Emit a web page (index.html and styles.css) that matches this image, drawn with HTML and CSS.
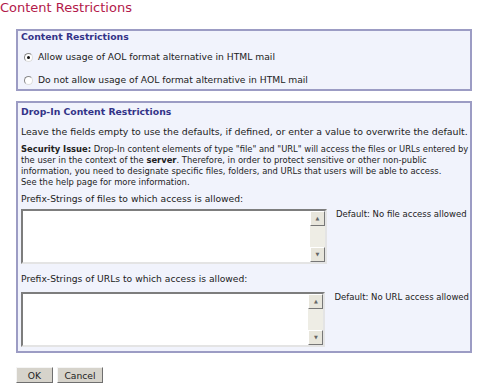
FILE: index.html
```html
<!DOCTYPE html>
<html lang="en">
<head>
    <meta charset="UTF-8">
    <title>Content Restrictions</title>
    <link rel="stylesheet" href="styles.css">
</head>
<body>
    <h1 class="page-title">Content Restrictions</h1>

    <div class="panel panel-aol">
        <h2 class="panel-title">Content Restrictions</h2>
        <label class="radio-row">
            <span class="radio checked"></span>
            Allow usage of AOL format alternative in HTML mail
        </label>
        <label class="radio-row">
            <span class="radio"></span>
            Do not allow usage of AOL format alternative in HTML mail
        </label>
    </div>

    <div class="panel panel-dropin">
        <h2 class="panel-title">Drop-In Content Restrictions</h2>
        <p class="intro">Leave the fields empty to use the defaults, if defined, or enter a value to overwrite the default.</p>
        <p class="security"><b>Security Issue:</b> Drop-In content elements of type "file" and "URL" will access the files or URLs entered by the user in the context of the <b>server</b>. Therefore, in order to protect sensitive or other non-public information, you need to designate specific files, folders, and URLs that users will be able to access.<br>See the help page for more information.</p>

        <div class="field-label">Prefix-Strings of files to which access is allowed:</div>
        <div class="field-row">
            <div class="textbox">
                <textarea class="textbox-input"></textarea>
                <div class="scrollbar">
                    <span class="scroll-btn">&#9650;</span>
                    <span class="scroll-btn">&#9660;</span>
                </div>
            </div>
            <div class="field-default">Default: No file access allowed</div>
        </div>

        <div class="field-label">Prefix-Strings of URLs to which access is allowed:</div>
        <div class="field-row">
            <div class="textbox">
                <textarea class="textbox-input"></textarea>
                <div class="scrollbar">
                    <span class="scroll-btn">&#9650;</span>
                    <span class="scroll-btn">&#9660;</span>
                </div>
            </div>
            <div class="field-default">Default: No URL access allowed</div>
        </div>
    </div>

    <div class="buttons">
        <button class="btn btn-ok">OK</button>
        <button class="btn btn-cancel">Cancel</button>
    </div>
</body>
</html>
```

FILE: styles.css
```css
body {
    margin: 0;
    font-family: "DejaVu Sans", Verdana, sans-serif;
    font-size: 9.2px;
    color: #222;
    background: #fff;
}

.page-title {
    margin: 0;
    font-size: 13px;
    line-height: 16px;
    font-weight: normal;
    color: #b3194a;
}

.panel {
    margin: 0 5px 0 16px;
    border: 2px solid #9c9cc4;
    background: #f1f3fc;
    padding: 0 1px 3px 3px;
}

.panel-aol {
    margin-top: 13px;
}

.panel-dropin {
    margin-top: 10px;
    padding-top: 3px;
    padding-bottom: 4px;
}

.panel-title {
    margin: 0;
    font-size: 9.3px;
    line-height: 12px;
    font-weight: bold;
    color: #333388;
}

.radio-row {
    display: flex;
    align-items: center;
    gap: 5px;
    line-height: 12px;
    margin-top: 8px;
    padding-left: 3px;
}

.radio-row + .radio-row {
    margin-top: 11px;
}

.radio {
    width: 7px;
    height: 7px;
    border-radius: 50%;
    border: 1px solid;
    border-color: #888 #ddd #ddd #888;
    background: #fff;
    display: flex;
    align-items: center;
    justify-content: center;
}

.radio.checked::after {
    content: "";
    width: 3px;
    height: 3px;
    border-radius: 50%;
    background: #111;
}

.intro {
    margin: 7px 0 0 0;
    font-size: 9.4px;
    line-height: 13px;
}

.security {
    margin: 6px 0 0 0;
    font-size: 8.4px;
    line-height: 11px;
}

.field-label {
    margin-top: 4px;
    line-height: 13px;
}

.field-row {
    display: flex;
    align-items: flex-start;
    gap: 9px;
    margin-top: 4px;
}

.field-row + .field-label {
    margin-top: 8px;
}

.field-row + .field-label + .field-row {
    margin-top: 7px;
}

.textbox {
    display: flex;
    width: 302px;
    height: 51px;
    border: 2px solid;
    border-color: #7d7d7d #e4e4e4 #e4e4e4 #7d7d7d;
    background: #fff;
}

.textbox-input {
    flex: 1;
    border: none;
    margin: 0;
    padding: 0;
    resize: none;
    outline: none;
    background: #fff;
}

.scrollbar {
    width: 15px;
    background: #eeede5;
    display: flex;
    flex-direction: column;
    justify-content: space-between;
}

.scroll-btn {
    height: 13px;
    background: #e8e6dc;
    border: 1px solid;
    border-color: #fff #777 #777 #fff;
    font-size: 5px;
    line-height: 13px;
    text-align: center;
    color: #666;
}

.field-default {
    white-space: nowrap;
    font-size: 8.5px;
    line-height: 10px;
}

.buttons {
    display: flex;
    gap: 4px;
    margin: 14px 0 0 16px;
}

.btn {
    font-family: "DejaVu Sans", Verdana, sans-serif;
    font-size: 9.2px;
    height: 16px;
    padding: 0;
    background: #d6d3cb;
    border: 1px solid;
    border-color: #f5f5f5 #6f6f6f #6f6f6f #f5f5f5;
    color: #222;
}

.btn-ok {
    width: 37px;
}

.btn-cancel {
    width: 46px;
}
```
